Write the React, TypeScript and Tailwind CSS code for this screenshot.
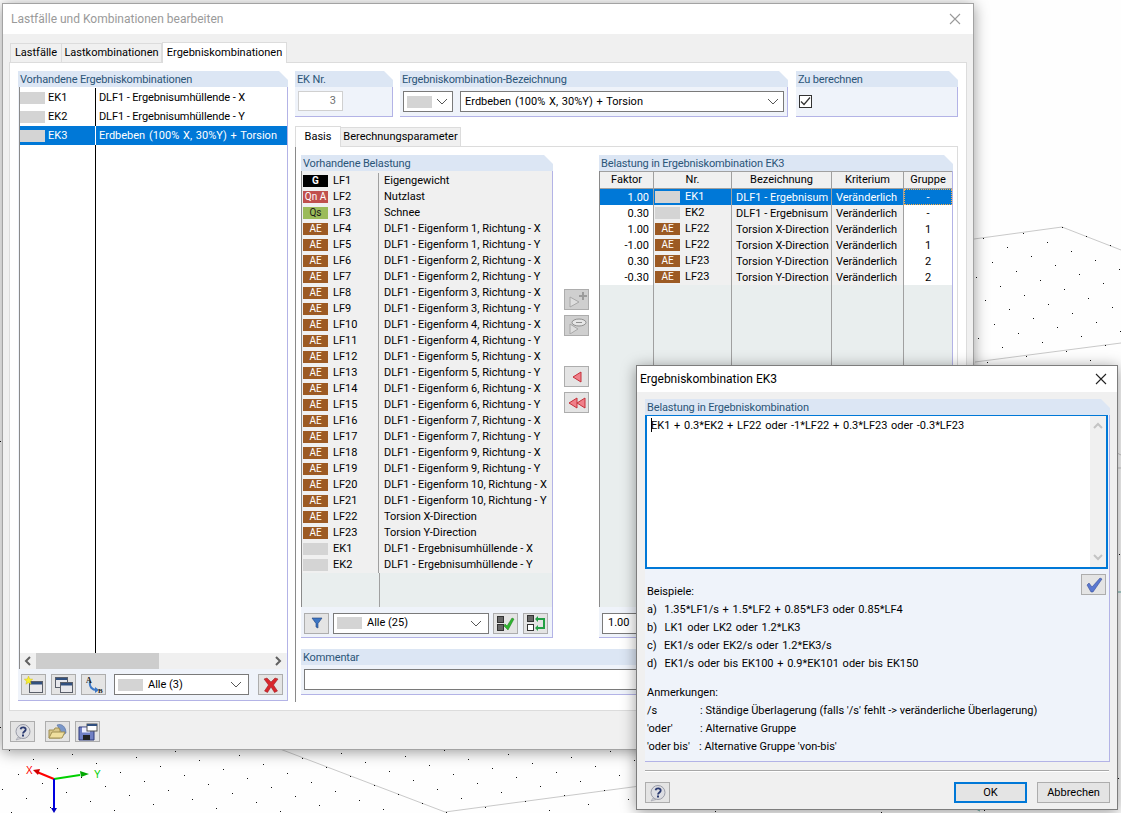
import React from "react";

const BLUE = "bg-[#0078d7]";

function Panel({ title, className = "", children, bodyClass = "" }: { title: string; className?: string; children?: React.ReactNode; bodyClass?: string }) {
  return (
    <div className={`flex flex-col ${className}`}>
      <div className="h-[16px] shrink-0 bg-[#dce6f4] pl-[2px] pt-px text-[11px] tracking-[-0.15px] leading-[16px] text-[#2b5578] [clip-path:polygon(0_0,calc(100%-9px)_0,100%_9px,100%_100%,0_100%)] whitespace-nowrap overflow-hidden">
        {title}
      </div>
      <div className={`flex-1 min-h-0 border-r border-b border-[#b3b3e6] bg-[#eff3fa] ${bodyClass}`}>{children}</div>
    </div>
  );
}

function Btn({ children, className = "", disabled = false }: { children?: React.ReactNode; className?: string; disabled?: boolean }) {
  return (
    <div className={`w-[25px] h-[21px] shrink-0 flex items-center justify-center border border-[#adadad] ${disabled ? "bg-[#cfcfcf]" : "bg-[#e4e4e4]"} ${className}`}>
      {children}
    </div>
  );
}

function Chevron({ className = "" }: { className?: string }) {
  return (
    <svg width="12" height="7" viewBox="0 0 12 7" className={className}>
      <path d="M1 1l5 5 5-5" fill="none" stroke="#555" strokeWidth="1" />
    </svg>
  );
}

function Swatch({ label, kind }: { label?: string; kind?: string }) {
  const cls =
    kind === "G" ? "bg-black text-white font-bold" :
    kind === "Q" ? "bg-[#c0504d] text-white" :
    kind === "S" ? "bg-[#9bbb59] text-[#1a1a1a]" :
    kind === "A" ? "bg-[#9c5a23] text-white" : "bg-[#d4d4d4]";
  return (
    <div className={`w-[25px] h-[12px] shrink-0 flex items-center justify-center text-[10px] leading-[12px] whitespace-nowrap ${cls}`}>{label}</div>
  );
}

const top = [
  { id: "EK1", name: "DLF1 - Ergebnisumhüllende - X" },
  { id: "EK2", name: "DLF1 - Ergebnisumhüllende - Y" },
  { id: "EK3", name: "Erdbeben (100% X, 30%Y) + Torsion", sel: true },
];

const forms = [1, 1, 2, 2, 3, 3, 4, 4, 5, 5, 6, 6, 7, 7, 9, 9, 10, 10];
const loads: { b?: string; k?: string; id: string; n: string }[] = [
  { b: "G", k: "G", id: "LF1", n: "Eigengewicht" },
  { b: "Qn A", k: "Q", id: "LF2", n: "Nutzlast" },
  { b: "Qs", k: "S", id: "LF3", n: "Schnee" },
  ...forms.map((f, i) => ({
    b: "AE",
    k: "A",
    id: `LF${i + 4}`,
    n: `DLF1 - Eigenform ${f}, Richtung - ${i % 2 ? "Y" : "X"}`,
  })),
  { b: "AE", k: "A", id: "LF22", n: "Torsion X-Direction" },
  { b: "AE", k: "A", id: "LF23", n: "Torsion Y-Direction" },
  { id: "EK1", n: "DLF1 - Ergebnisumhüllende - X" },
  { id: "EK2", n: "DLF1 - Ergebnisumhüllende - Y" },
];

const combos: { f: string; b?: string; id: string; n: string; g: string; sel?: boolean }[] = [
  { f: "1.00", id: "EK1", n: "DLF1 - Ergebnisum", g: "-", sel: true },
  { f: "0.30", id: "EK2", n: "DLF1 - Ergebnisum", g: "-" },
  { f: "1.00", b: "AE", id: "LF22", n: "Torsion X-Direction", g: "1" },
  { f: "-1.00", b: "AE", id: "LF22", n: "Torsion X-Direction", g: "1" },
  { f: "0.30", b: "AE", id: "LF23", n: "Torsion Y-Direction", g: "2" },
  { f: "-0.30", b: "AE", id: "LF23", n: "Torsion Y-Direction", g: "2" },
];

function Background() {
  const dots: React.ReactNode[] = [];
  for (let i = -60; i < 40; i++) {
    for (let j = -30; j < 70; j++) {
      const x = Math.round(1062 + i * 24 - j * 15.4);
      const y = Math.round(227 + i * 9 + j * 14.63);
      if (x < 0 || x > 1121 || y > 813) continue;
      const minY = x < 1062 ? 227 + (1062 - x) * 0.133 : 227 + (x - 1062) * 0.375;
      if (y < minY - 1) continue;
      dots.push(<rect key={`${i}_${j}`} x={x} y={y} width="1" height="1" fill="#111" />);
    }
  }
  return (
    <svg width="1121" height="813" className="absolute left-0 top-0">
      <g stroke="#c9c9c9" strokeWidth="1" fill="none">
        <path d="M974 239L1062 227L1121 250" />
        <path d="M975 362L1121 343" />
        <path d="M280 749L445 812L640 786" />
        <path d="M1117 453L1121 455M1117 468H1121" />
      </g>
      <path d="M1117 592H1121M974 808L980 811" stroke="#5fa8a0" strokeWidth="1" />
      {dots}
      <path d="M54 779L37 772" stroke="#ff0000" strokeWidth="2" />
      <path d="M33 770l7-1-2 6z" fill="#d00000" />
      <path d="M54 779L80 775" stroke="#00d000" strokeWidth="2" />
      <path d="M89 774l-9-3 1 6z" fill="#00a800" />
      <path d="M54 779V808" stroke="#0000e0" strokeWidth="2" />
      <path d="M51 808h6l-3 5z" fill="#0000c0" />
      <text x="26" y="774" fontSize="10" fill="#ff0000" fontFamily="Liberation Sans, sans-serif">X</text>
      <text x="94" y="778" fontSize="10" fill="#00d000" fontFamily="Liberation Sans, sans-serif">Y</text>
    </svg>
  );
}

const Help = () => (
  <svg width="20" height="18" viewBox="0 0 20 18">
    <circle cx="10" cy="8.500" r="7" fill="#dcdde2" stroke="#9a9ca8" />
    <path d="M5 14l-2 3 5-1.500z" fill="#d0d1d8" stroke="#9a9ca8" strokeWidth=".6" />
    <path d="M7.500 6.200c.6-2.500 5.400-2.400 5.200.4-.1 1.900-2.500 1.900-2.700 3.900" fill="none" stroke="#2a3a70" strokeWidth="1.800" />
    <rect x="9" y="11.500" width="2" height="2" fill="#2a3a70" />
  </svg>
);

export default function App() {
  return (
    <div className="relative w-[1121px] h-[813px] overflow-hidden bg-[#fefefe] font-['Roboto',sans-serif] text-[11px] leading-[16px] text-black">
      <Background />

      {/* Main window */}
      <div className="absolute left-[2px] top-[3px] w-[972px] h-[747px] border border-[#a3a3a3] bg-[#f0f0f0] flex flex-col shadow-[0_2px_14px_rgba(0,0,0,0.4)]">
        <div className="h-[30px] shrink-0 bg-white flex items-center justify-between pl-[8px] pr-[12px]">
          <span className="text-[12px] text-[#9a9a9a]">Lastfälle und Kombinationen bearbeiten</span>
          <svg width="12" height="12" viewBox="0 0 12 12"><path d="M1 1l10 10M11 1L1 11" stroke="#9a9a9a" strokeWidth="1.100" /></svg>
        </div>

        {/* tabs */}
        <div className="h-[28px] shrink-0 flex items-end pl-[7px]">
          <div className="h-[19px] w-[52px] bg-[#f0f0f0] border border-b-0 border-[#dcdcdc] flex items-center justify-center">Lastfälle</div>
          <div className="h-[19px] w-[100px] bg-[#f0f0f0] border border-l-0 border-b-0 border-[#dcdcdc] flex items-center justify-center">Lastkombinationen</div>
          <div className="h-[21px] w-[125px] -mb-px z-10 bg-white border border-b-0 border-[#dcdcdc] flex items-center justify-center">Ergebniskombinationen</div>
        </div>

        {/* tab content */}
        <div className="ml-[6px] w-[958px] h-[649px] shrink-0 bg-white border border-[#dcdcdc] pl-[8px] pt-[8px] flex gap-[7px]">
          {/* left panel */}
          <Panel title="Vorhandene Ergebniskombinationen" className="w-[270px] h-[630px]" bodyClass="flex flex-col">
            <div className="flex-1 min-h-0 ml-px pt-px flex flex-col bg-white border-l border-[#8a8a8a]">
              {top.map((r) => (
                <div key={r.id} className={`h-[19px] flex items-center leading-[18px] ${r.sel ? `${BLUE} text-white` : ""}`}>
                  <div className={`w-[76px] h-full flex items-center border-r ${r.sel ? "border-white" : "border-black"}`}>
                    <Swatch />
                    <span className="ml-[3px]">{r.id}</span>
                  </div>
                  <span className={`ml-[3px] whitespace-nowrap ${r.sel ? "[word-spacing:1px]" : "tracking-[-0.1px]"}`}>{r.name}</span>
                </div>
              ))}
              <div className="flex-1 w-[76px] border-r border-black" />
            </div>
            <div className="h-[16px] shrink-0 ml-px bg-[#f0f0f0] flex items-center border-l border-[#8a8a8a] mr-px">
              <svg width="16" height="16" viewBox="0 0 16 16" className="shrink-0"><path d="M10 4L6 8l4 4" fill="none" stroke="#606060" strokeWidth="2" /></svg>
              <div className="w-[123px] h-full bg-[#cdcdcd]" />
              <div className="flex-1" />
              <svg width="16" height="16" viewBox="0 0 16 16" className="shrink-0"><path d="M6 4l4 4-4 4" fill="none" stroke="#606060" strokeWidth="2" /></svg>
            </div>
            <div className="h-[31px] shrink-0 flex items-center pl-[3px] pr-[2px]">
              <Btn>
                <svg width="20" height="18" viewBox="0 0 20 18">
                  <rect x="5.500" y="5.500" width="13" height="11" fill="#e8e8ec" stroke="#5a5f6a" />
                  <rect x="6" y="6" width="12" height="2.500" fill="#31507f" />
                  <path d="M4.500 0l1.200 2.900 3 .3-2.300 2 .7 3-2.600-1.600L1.900 8.200l.7-3-2.300-2 3-.3z" fill="#f6ee30" stroke="#c9b400" strokeWidth=".4" />
                </svg>
              </Btn>
              <Btn className="ml-[5px]">
                <svg width="20" height="18" viewBox="0 0 20 18">
                  <rect x="1.500" y="1.500" width="12" height="10" fill="#e8e8ec" stroke="#5a5f6a" />
                  <rect x="2" y="2" width="11" height="2" fill="#31507f" />
                  <rect x="6.500" y="6.500" width="12" height="10" fill="#e8e8ec" stroke="#5a5f6a" />
                  <rect x="7" y="7" width="11" height="2.500" fill="#31507f" />
                </svg>
              </Btn>
              <Btn className="ml-[5px]">
                <svg width="20" height="18" viewBox="0 0 20 18">
                  <path d="M6 5c-1 6 2 9 7 9" fill="none" stroke="#3c78c8" strokeWidth="2" />
                  <path d="M11 11l4 3-4 3z" fill="#3c78c8" />
                  <text x="2" y="7" fontSize="8" fontWeight="700" fontFamily="Liberation Serif, serif" fill="#222">A</text>
                  <text x="14" y="17" fontSize="7" fontWeight="700" fontFamily="Liberation Serif, serif" fill="#222">B</text>
                </svg>
              </Btn>
              <div className="ml-[8px] w-[135px] h-[21px] bg-white border border-[#7a7a7a] flex items-center pl-[3px] pr-[6px]">
                <Swatch />
                <span className="ml-[5px] flex-1 leading-[18px]">Alle (3)</span>
                <Chevron />
              </div>
              <Btn className="ml-[9px]">
                <svg width="16" height="16" viewBox="0 0 16 16">
                  <path d="M1 2l3-1 4 4 4-4 3 1-4.500 6 4 6-3 1.500L8 10l-3.500 5.500L1.500 14l4-6z" fill="#d8262c" stroke="#8f1b1f" strokeWidth=".5" />
                </svg>
              </Btn>
            </div>
          </Panel>

          {/* right column */}
          <div className="w-[663px] flex flex-col">
            <div className="flex h-[46px] shrink-0">
              <Panel title="EK Nr." className="w-[98px]" bodyClass="pl-[3px] pt-[4px]">
                <div className="w-[45px] h-[20px] bg-white border border-[#d0d0d0] flex items-center justify-end pr-[6px] text-[#707070]">3</div>
              </Panel>
              <Panel title="Ergebniskombination-Bezeichnung" className="w-[388px] ml-[7px]" bodyClass="pl-[3px] pt-[4px] flex">
                <div className="w-[50px] h-[21px] bg-white border border-[#7a7a7a] flex items-center pl-[3px] pr-[4px] justify-between">
                  <Swatch />
                  <Chevron />
                </div>
                <div className="ml-[7px] w-[324px] h-[21px] bg-white border border-[#7a7a7a] flex items-center pl-[4px] pr-[4px] justify-between">
                  <span className="[word-spacing:1px]">Erdbeben (100% X, 30%Y) + Torsion</span>
                  <Chevron />
                </div>
              </Panel>
              <Panel title="Zu berechnen" className="w-[162px] ml-[8px]" bodyClass="pl-[3px] pt-[8px]">
                <div className="w-[13px] h-[13px] bg-white border border-[#333] flex items-center justify-center">
                  <svg width="11" height="11" viewBox="0 0 11 11"><path d="M1 5.500l3 3 6-7" fill="none" stroke="#333" strokeWidth="1.200" /></svg>
                </div>
              </Panel>
            </div>

            {/* inner tabs */}
            <div className="h-[21px] mt-[8px] shrink-0 flex items-end">
              <div className="h-[21px] w-[46px] -mb-px z-10 bg-white border border-b-0 border-[#dcdcdc] flex items-center justify-center">Basis</div>
              <div className="h-[19px] w-[120px] bg-[#f0f0f0] border border-l-0 border-b-0 border-[#dcdcdc] flex items-center justify-center whitespace-nowrap">Berechnungsparameter</div>
            </div>
            <div className="h-[556px] shrink-0 border-t border-r border-[#dcdcdc] border-l border-l-[#8a8a8a] pl-[5px] pt-[8px] flex flex-col">
              <div className="flex h-[483px] shrink-0">
                {/* available loads */}
                <Panel title="Vorhandene Belastung" className="w-[252px]" bodyClass="flex flex-col">
                  <div className="flex-1 min-h-0 flex flex-col bg-[#e9eeee] border-l border-[#8a8a8a] ml-0">
                    <div className="shrink-0 bg-[#f0f0f0] pt-[2px]">
                      {loads.map((r, i) => (
                        <div key={i} className="h-[16px] flex items-center">
                          <div className="w-[77px] h-full flex items-center pl-px border-r border-[#a0a0a0] shrink-0">
                            <Swatch label={r.b} kind={r.k} />
                            <span className="ml-[5px]">{r.id}</span>
                          </div>
                          <span className="ml-[5px] whitespace-nowrap">{r.n}</span>
                        </div>
                      ))}
                    </div>
                    <div className="flex-1 w-[78px] border-r border-[#a0a0a0]" />
                  </div>
                  <div className="h-[30px] shrink-0 flex items-center pl-[3px] pt-[2px]">
                    <Btn>
                      <svg width="14" height="14" viewBox="0 0 14 14"><path d="M2 2h10L8 7.500V12l-2-1V7.500z" fill="#3d76c4" stroke="#1e3f7a" strokeWidth=".6" /></svg>
                    </Btn>
                    <div className="ml-[4px] w-[156px] h-[21px] bg-white border border-[#7a7a7a] flex items-center pl-[3px] pr-[6px]">
                      <Swatch />
                      <span className="ml-[5px] flex-1 leading-[18px]">Alle (25)</span>
                      <Chevron />
                    </div>
                    <Btn className="ml-[4px]">
                      <svg width="20" height="18" viewBox="0 0 20 18">
                        <rect x="1.500" y="2.500" width="6" height="6" fill="#666" stroke="#333" />
                        <rect x="1.500" y="10.500" width="6" height="6" fill="#666" stroke="#333" />
                        <path d="M9 10l2 2 5-8 2 1-6 11-4-4z" fill="#2fb52f" stroke="#1b7d1b" strokeWidth=".5" />
                      </svg>
                    </Btn>
                    <Btn className="ml-[5px]">
                      <svg width="20" height="18" viewBox="0 0 20 18">
                        <rect x="1.500" y="1.500" width="6" height="6" fill="#666" stroke="#333" />
                        <rect x="1.500" y="10.500" width="6" height="6" fill="#fff" stroke="#333" />
                        <path d="M10 5h8v9h-8" fill="none" stroke="#22a045" strokeWidth="2" />
                        <path d="M12 2l-3 3 3 3zM12 11l-3 3 3 3z" fill="#22a045" />
                      </svg>
                    </Btn>
                  </div>
                </Panel>

                {/* arrows */}
                <div className="w-[47px] shrink-0 flex flex-col pl-[11px] pt-[134px]">
                  <Btn disabled>
                    <svg width="20" height="16" viewBox="0 0 20 16"><path d="M3 5l9 5-9 5z" fill="#dedede" stroke="#a8a8a8" /><path d="M12 3h3V0h2v3h3v2h-3v3h-2V5h-3z" fill="#9c9c9c" /></svg>
                  </Btn>
                  <Btn disabled className="mt-[5px]">
                    <svg width="20" height="16" viewBox="0 0 20 16"><path d="M3 6l8 5-8 5z" fill="#dedede" stroke="#a8a8a8" /><ellipse cx="12" cy="4.500" rx="7" ry="3.500" fill="#e6e6e6" stroke="#8f8f8f" /><path d="M9 4.500h6" stroke="#8f8f8f" /></svg>
                  </Btn>
                  <Btn className="mt-[30px]">
                    <svg width="14" height="14" viewBox="0 0 14 14"><path d="M11 2v10L3 7z" fill="#f0808a" stroke="#c5303a" /></svg>
                  </Btn>
                  <Btn className="mt-[5px]">
                    <svg width="20" height="14" viewBox="0 0 20 14"><path d="M10 2v10L2 7z" fill="#f0808a" stroke="#c5303a" /><path d="M18 2v10l-8-5z" fill="#f0808a" stroke="#c5303a" /></svg>
                  </Btn>
                </div>

                {/* combo table */}
                <Panel title="Belastung in Ergebniskombination EK3" className="-ml-px w-[354px]" bodyClass="flex flex-col">
                  <div className="flex-1 min-h-0 flex flex-col bg-[#e9eeee] border-l border-[#8a8a8a]">
                    <div className="h-[18px] shrink-0 flex bg-[#f0f0f0] border-y border-[#a0a0a0] text-center">
                      <div className="w-[54px] border-r border-[#a0a0a0]">Faktor</div>
                      <div className="w-[78px] border-r border-[#a0a0a0]">Nr.</div>
                      <div className="w-[100px] border-r border-[#a0a0a0]">Bezeichnung</div>
                      <div className="w-[72px] border-r border-[#a0a0a0]">Kriterium</div>
                      <div className="flex-1">Gruppe</div>
                    </div>
                    {combos.map((r, i) => (
                      <div key={i} className={`h-[16px] shrink-0 flex leading-[18px] ${r.sel ? `${BLUE} text-white` : "bg-[#f0f0f0]"}`}>
                        <div className={`w-[54px] border-r border-[#a0a0a0] text-right pr-[4px] ${r.sel ? "" : "bg-white"}`}>{r.f}</div>
                        <div className="w-[78px] border-r border-[#a0a0a0] flex items-center pl-px">
                          <Swatch label={r.b} kind={r.b ? "A" : undefined} />
                          <span className="ml-[5px]">{r.id}</span>
                        </div>
                        <div className="w-[100px] border-r border-[#a0a0a0] pl-[4px] whitespace-nowrap">{r.n}</div>
                        <div className="w-[72px] border-r border-[#a0a0a0] pl-[4px] whitespace-nowrap">Veränderlich</div>
                        <div className={`flex-1 text-center ${r.sel ? "outline-1 -outline-offset-1 outline-dotted outline-[#ffae42]" : "bg-white"}`}>{r.g}</div>
                      </div>
                    ))}
                    <div className="flex-1 flex">
                      <div className="w-[54px] border-r border-[#a0a0a0]" />
                      <div className="w-[78px] border-r border-[#a0a0a0]" />
                      <div className="w-[100px] border-r border-[#a0a0a0]" />
                      <div className="w-[72px] border-r border-[#a0a0a0]" />
                    </div>
                  </div>
                  <div className="h-[30px] shrink-0 flex items-center pl-[3px] pt-[2px]">
                    <div className="w-[60px] h-[21px] bg-white border border-[#7a7a7a] flex items-center pl-[5px]">1.00</div>
                  </div>
                </Panel>
              </div>

              <Panel title="Kommentar" className="w-[652px] h-[46px] mt-[11px] shrink-0" bodyClass="pl-[3px] pt-[4px]">
                <div className="h-[21px] bg-white border border-[#7a7a7a]" />
              </Panel>
            </div>
          </div>
        </div>

        {/* bottom buttons */}
        <div className="flex pl-[7px] pt-[10px]">
          <Btn><Help /></Btn>
          <Btn className="ml-[10px]">
            <svg width="20" height="18" viewBox="0 0 20 18">
              <path d="M9 2c5-2 9 2 9 8l-3 2z" fill="#7b97c9" stroke="#4d6a9c" strokeWidth=".6" />
              <path d="M1 7h5l1-2h4l1 2v8H1z" fill="#d9c78a" stroke="#a08f52" />
              <path d="M1 15l3-6h13l-3 6z" fill="#efdf9f" stroke="#a08f52" />
            </svg>
          </Btn>
          <Btn className="ml-[5px]">
            <svg width="20" height="18" viewBox="0 0 20 18">
              <path d="M1 4h13l2 2v11H1z" fill="#7180c4" stroke="#2e3a7a" />
              <rect x="4" y="4.500" width="8" height="5" fill="#eef" />
              <rect x="5" y="12" width="7" height="5" fill="#222" />
              <rect x="9" y="1" width="10" height="7" fill="#fff" stroke="#555" />
              <rect x="9" y="1" width="10" height="2" fill="#31507f" />
            </svg>
          </Btn>
        </div>
      </div>

      {/* Modal */}
      <div className="absolute left-[636px] top-[365px] w-[482px] h-[445px] border border-[#7d7d7d] bg-[#f0f0f0] flex flex-col shadow-[0_2px_14px_rgba(0,0,0,0.4)]">
        <div className="h-[26px] shrink-0 bg-white flex items-center justify-between pl-[3px] pr-[10px]">
          <span className="text-[12px]">Ergebniskombination EK3</span>
          <svg width="12" height="12" viewBox="0 0 12 12"><path d="M1 1l10 10M11 1L1 11" stroke="#222" strokeWidth="1.100" /></svg>
        </div>
        <div className="pl-[8px] pr-[7px] pt-[7px] flex flex-col flex-1">
          <Panel title="Belastung in Ergebniskombination" className="h-[363px] shrink-0 w-[465px]" bodyClass="flex flex-col">
            <div className="h-[154px] shrink-0 w-[463px] bg-white border-2 border-[#0078d7] border-t-[1px] flex">
              <div className="flex-1 pl-[4px] pt-[1px] leading-[17px] relative [word-spacing:1px]">
                <span className="absolute left-[4px] top-[2px] w-px h-[14px] bg-black" />
                EK1 + 0.3*EK2 + LF22 oder -1*LF22 + 0.3*LF23 oder -0.3*LF23
              </div>
              <div className="w-[16px] bg-[#f0f0f0] flex flex-col items-center justify-between py-[6px]">
                <svg width="10" height="7" viewBox="0 0 10 7"><path d="M1 6l4-4 4 4" fill="none" stroke="#c4c4c4" strokeWidth="2" /></svg>
                <svg width="10" height="7" viewBox="0 0 10 7"><path d="M1 1l4 4 4-4" fill="none" stroke="#c4c4c4" strokeWidth="2" /></svg>
              </div>
            </div>
            <div className="relative flex-1 pl-[2px] pt-[14px] leading-[18px]">
              <Btn className="absolute right-[3px] top-[5px]">
                <svg width="18" height="16" viewBox="0 0 18 16"><path d="M2 8l2-2 3 4 8-9 2 1-9 13h-2z" fill="#5a78d0" stroke="#2b418c" strokeWidth=".5" /></svg>
              </Btn>
              <div>Beispiele:</div>
              <div className="[word-spacing:1px]">a)&nbsp; 1.35*LF1/s + 1.5*LF2 + 0.85*LF3 oder 0.85*LF4</div>
              <div className="[word-spacing:1px]">b)&nbsp; LK1 oder LK2 oder 1.2*LK3</div>
              <div className="[word-spacing:1px]">c)&nbsp; EK1/s oder EK2/s oder 1.2*EK3/s</div>
              <div className="[word-spacing:1px]">d)&nbsp; EK1/s oder bis EK100 + 0.9*EK101 oder bis EK150</div>
              <div className="mt-[11px]">Anmerkungen:</div>
              <div className="flex"><span className="w-[53px]">/s</span><span>: Ständige Überlagerung (falls '/s' fehlt -&gt; veränderliche Überlagerung)</span></div>
              <div className="flex"><span className="w-[53px]">'oder'</span><span>: Alternative Gruppe</span></div>
              <div className="flex"><span className="w-[52px]">'oder bis'</span><span>: Alternative Gruppe 'von-bis'</span></div>
            </div>
          </Panel>
          <div className="h-[2px] mt-[8px] w-[464px] bg-[#a8a8a8] border-b border-white shrink-0" />
          <div className="mt-[10px] flex items-center">
            <Btn><Help /></Btn>
            <div className="ml-auto w-[73px] h-[21px] border-2 border-[#0078d7] bg-[#e4e4e4] flex items-center justify-center">OK</div>
            <div className="ml-[10px] w-[73px] h-[21px] border border-[#adadad] bg-[#e4e4e4] flex items-center justify-center">Abbrechen</div>
          </div>
        </div>
      </div>
    </div>
  );
}
